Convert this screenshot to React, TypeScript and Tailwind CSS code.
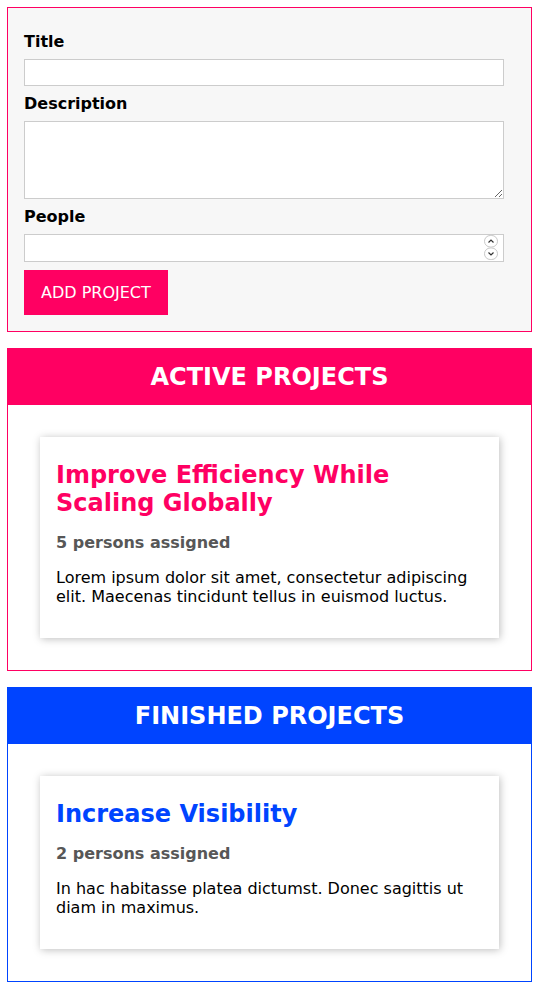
const projects = {
  active: [
    {
      id: "p1",
      title: "Improve Efficiency While Scaling Globally",
      people: 5,
      description:
        "Lorem ipsum dolor sit amet, consectetur adipiscing elit. Maecenas tincidunt tellus in euismod luctus.",
    },
  ],
  finished: [
    {
      id: "p2",
      title: "Increase Visibility",
      people: 2,
      description: "In hac habitasse platea dictumst. Donec sagittis ut diam in maximus.",
    },
  ],
};

type Project = (typeof projects.active)[number];

function ProjectList({ kind, items }: { kind: "active" | "finished"; items: Project[] }) {
  const isActive = kind === "active";
  return (
    <section
      className={`ml-[7px] mr-[6px] border ${isActive ? "border-[#ff0062]" : "border-[#0044ff]"}`}
    >
      <header
        className={`h-14 flex items-center justify-center ${isActive ? "bg-[#ff0062]" : "bg-[#0044ff]"}`}
      >
        <h2 className="m-0 text-[24px] font-bold text-white">
          {isActive ? "ACTIVE PROJECTS" : "FINISHED PROJECTS"}
        </h2>
      </header>
      <ul className="list-none m-0 p-4">
        {items.map((p) => (
          <li key={p.id} className="m-4 p-4 bg-white shadow-[1px_1px_8px_rgba(0,0,0,0.26)]">
            <h2
              className={`my-2 text-[24px] font-bold ${isActive ? "text-[#ff0062]" : "text-[#0044ff]"}`}
            >
              {p.title}
            </h2>
            <h3 className="my-4 font-bold text-[#575757]">{p.people} persons assigned</h3>
            <p className="my-4">{p.description}</p>
          </li>
        ))}
      </ul>
    </section>
  );
}

// spin buttons drawn as in the reference browser
function Spinner() {
  return (
    <svg
      className="absolute right-[6px] top-[1px] pointer-events-none"
      width="14"
      height="26"
      viewBox="0 0 14 26"
    >
      <rect x="0.5" y="0.5" width="13" height="11.5" rx="5.75" fill="#fff" stroke="#c8c8c8" />
      <rect x="0.5" y="13" width="13" height="11.5" rx="5.75" fill="#fff" stroke="#c8c8c8" />
      <path d="M4.5 7.5 L7 5 L9.5 7.5" fill="none" stroke="#333" strokeWidth="1.2" />
      <path d="M4.5 17.5 L7 20 L9.5 17.5" fill="none" stroke="#333" strokeWidth="1.2" />
    </svg>
  );
}

export default function App() {
  const inputCls =
    "block w-full border border-[#ccc] bg-white px-[6.4px] py-[3.2px] outline-none focus:bg-[#fff5f9]";
  return (
    <div className="font-['DejaVu_Sans',sans-serif] leading-[normal] text-black bg-white min-h-screen pt-[7px] pb-[6px] flex flex-col gap-4">
      <form
        className="ml-[7px] mr-[6px] p-4 border border-[#ff0062] bg-[#f7f7f7]"
        onSubmit={(e) => e.preventDefault()}
      >
        <label htmlFor="title" className="block my-2 font-bold">
          Title
        </label>
        <input id="title" type="text" className={`${inputCls} my-2 max-w-[30rem]`} />
        <label htmlFor="description" className="block my-2 font-bold">
          Description
        </label>
        <textarea id="description" className={`${inputCls} my-2 max-w-[30rem] h-[78px]`} />
        <label htmlFor="people" className="block my-2 font-bold">
          People
        </label>
        <div className="relative my-2 max-w-[30rem]">
          <input id="people" type="number" className={inputCls} />
          <Spinner />
        </div>
        <button
          type="submit"
          className="block bg-[#ff0062] border border-[#ff0062] text-white px-4 py-3 cursor-pointer"
        >
          ADD PROJECT
        </button>
      </form>
      <ProjectList kind="active" items={projects.active} />
      <ProjectList kind="finished" items={projects.finished} />
    </div>
  );
}
